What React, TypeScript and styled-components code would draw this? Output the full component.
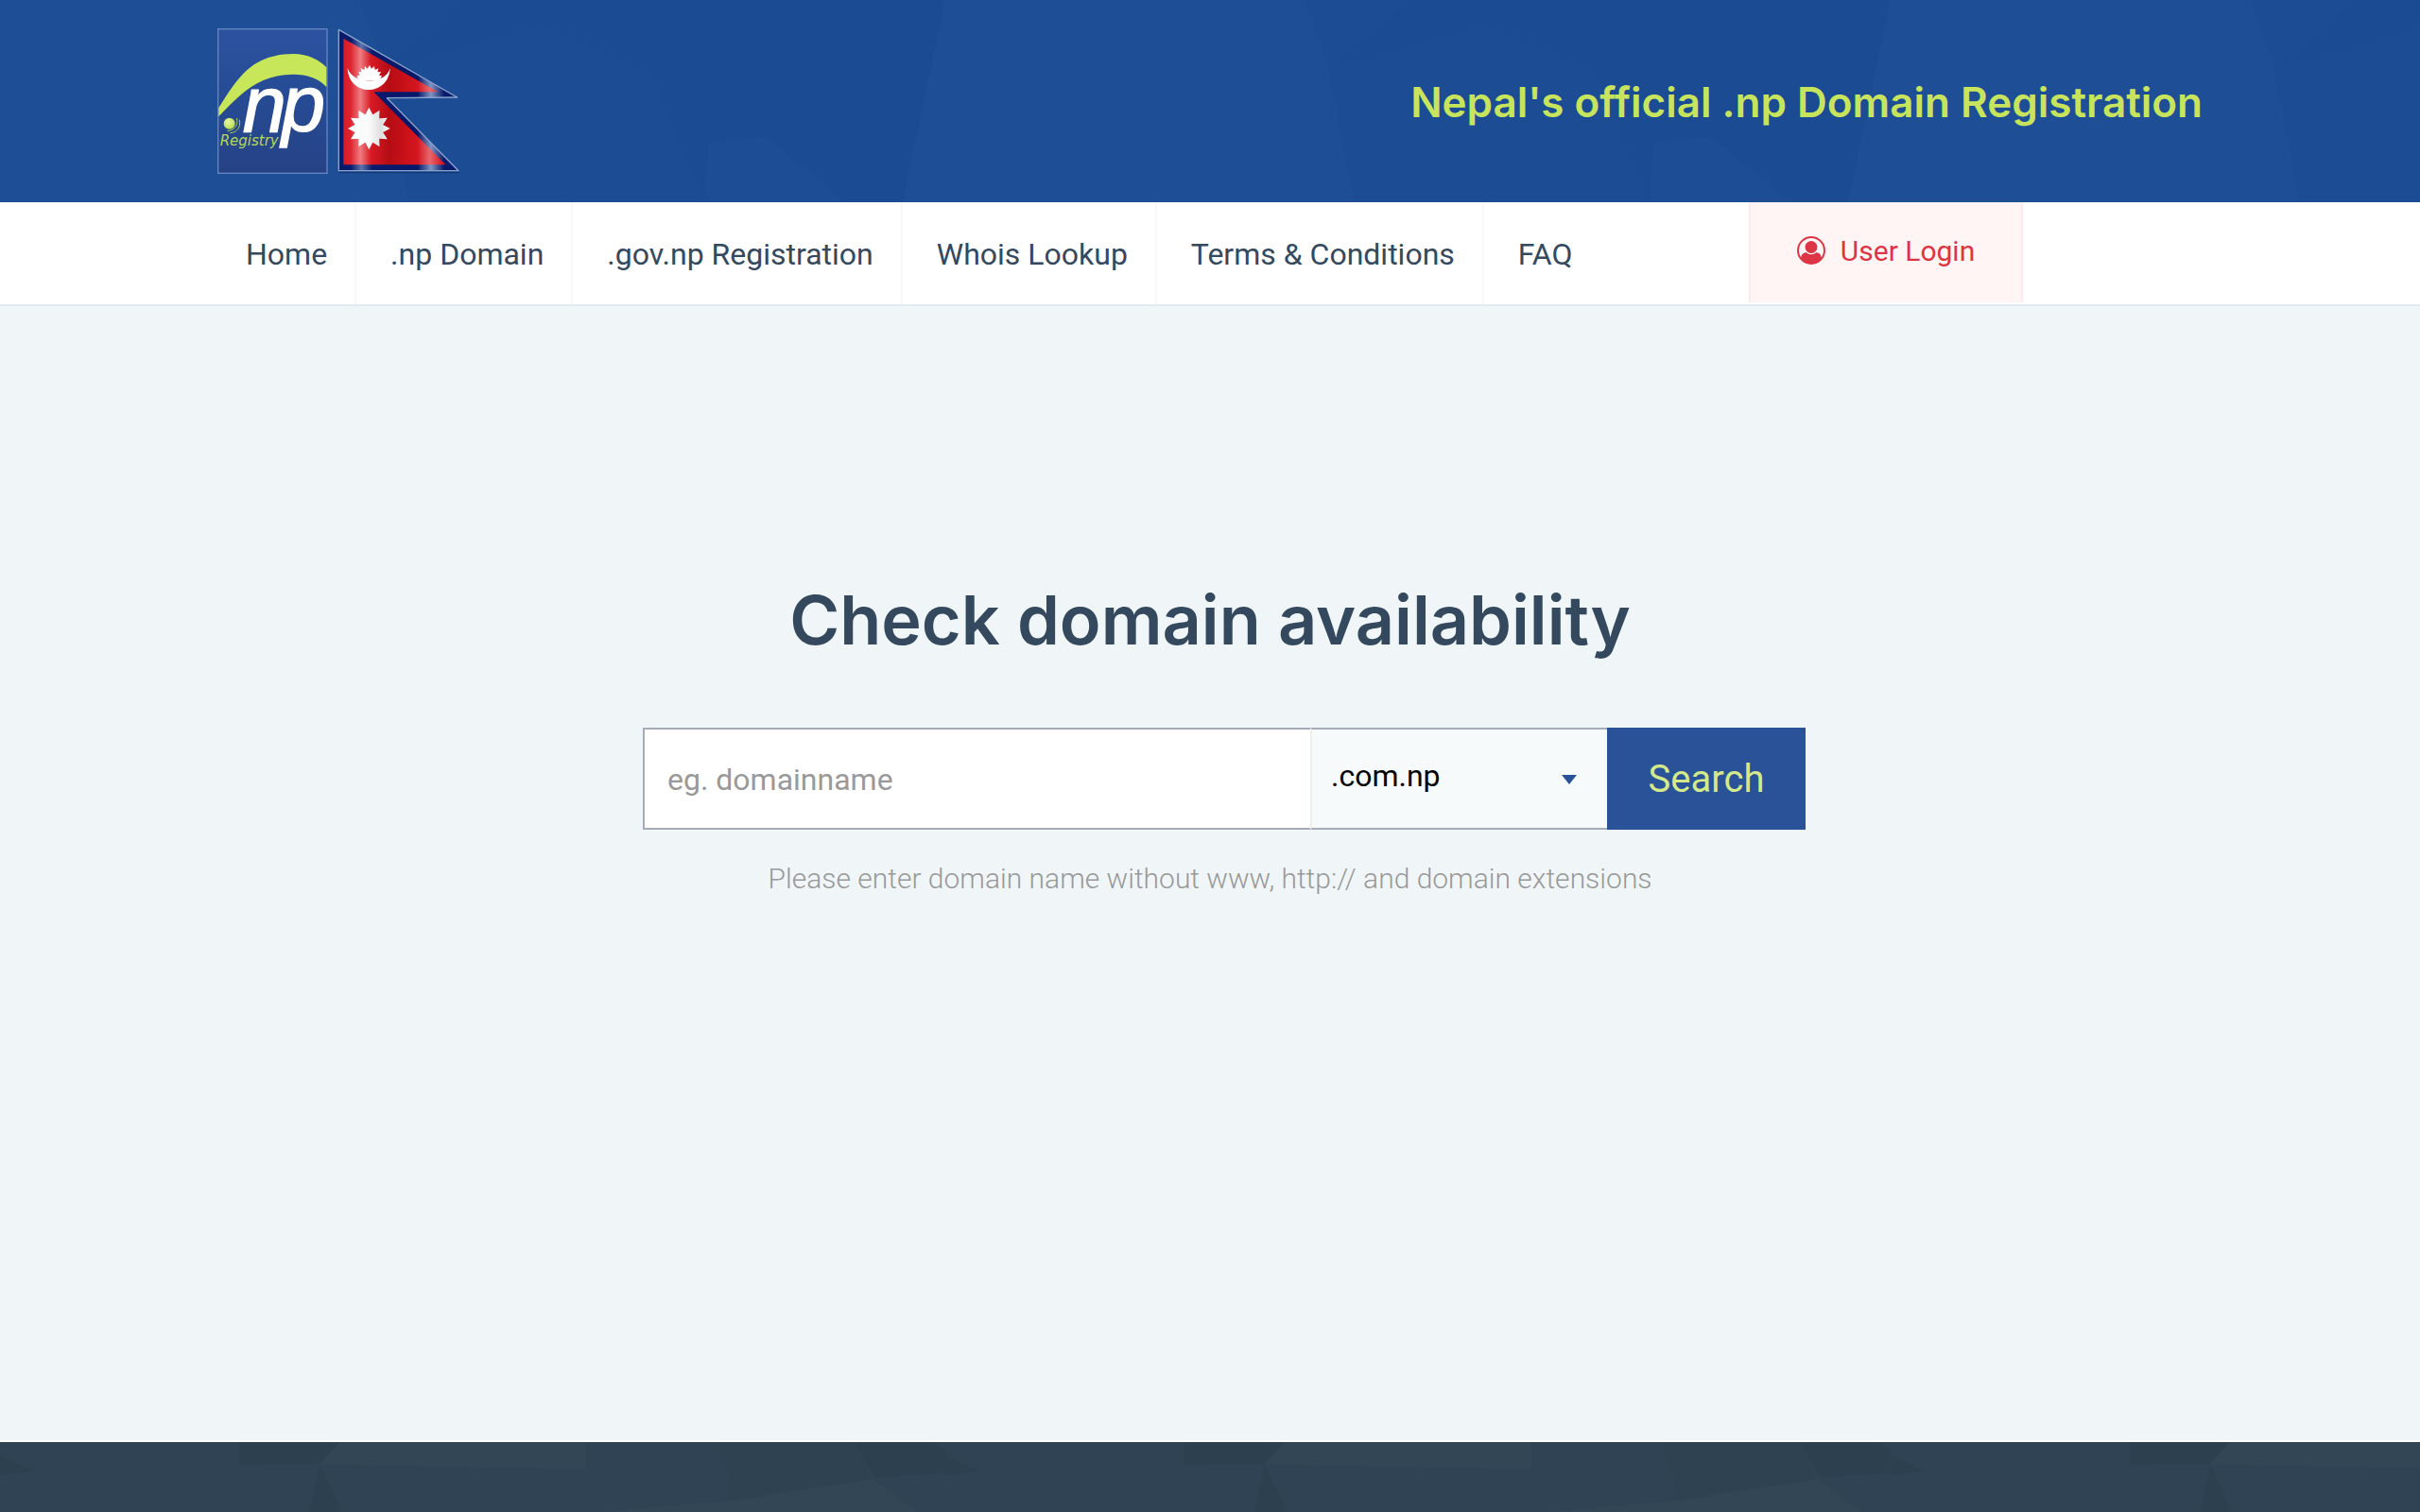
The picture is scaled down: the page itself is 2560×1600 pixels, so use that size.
import React from "react";
import styled, { createGlobalStyle } from "styled-components";

const GlobalStyle = createGlobalStyle`
  *, *::before, *::after { box-sizing: border-box; }
  body {
    margin: 0;
    background: #f0f6f8;
    color: #34495e;
    font-family: Roboto, "Liberation Sans", sans-serif;
    font-size: 32px;
  }
`;

const Page = styled.div`
  display: flex;
  flex-direction: column;
  min-height: 100vh;
`;

const Container = styled.div`
  width: 100%;
  max-width: 2100px;
  margin: 0 auto;
  display: flex;
`;

const Header = styled.header`
  position: relative;
  background: #1b4b93;
  padding: 30px 0 29px;
`;

const Backdrop = styled.svg`
  position: absolute;
  inset: 0;
  width: 100%;
  height: 100%;
`;

const HeaderRow = styled(Container)`
  position: relative;
  align-items: center;
  justify-content: space-between;
`;

const LogoLink = styled.a`
  display: block;
  svg { display: block; }
`;

const Tagline = styled.h2`
  margin: 0;
  color: #c8e45c;
  font-family: Inter, "Liberation Sans", sans-serif;
  font-size: 44px;
  font-weight: 600;
  line-height: 56px;
`;

const NavBar = styled.nav`
  background: #fff;
  border-bottom: 2px solid #e0ecf0;
`;

const NavRow = styled(Container)`
  height: 108px;
  padding-right: 190px;
`;

const Menu = styled.ul`
  display: flex;
  margin: 0;
  padding: 0;
  list-style: none;
`;

const MenuItem = styled.li`
  display: flex;
  border-right: 2px solid #f8f8f8;
  &:last-child { border-right: 0; }
  &:first-child a { padding-left: 30px; }
`;

const MenuLink = styled.a`
  display: flex;
  align-items: center;
  padding: 2px 29px 0 36px;
  color: #34495e;
  text-decoration: none;
  white-space: nowrap;
`;

const Login = styled.a`
  display: flex;
  align-items: center;
  justify-content: center;
  gap: 16px;
  width: 290px;
  height: 106px;
  margin-left: auto;
  padding-bottom: 4px;
  background: #fff5f4;
  border: solid #feebeb;
  border-width: 0 2px;
  color: #dc3545;
  font-size: 30px;
  text-decoration: none;
`;

const Main = styled.main`
  flex: 1;
  display: flex;
  flex-direction: column;
  align-items: center;
  padding-top: 285px;
  border-bottom: 2px solid #fff;
`;

const Title = styled.h1`
  margin: 0 0 67px;
  font-family: Inter, "Liberation Sans", sans-serif;
  font-size: 72px;
  font-weight: 600;
  line-height: 94px;
`;

const SearchForm = styled.form`
  display: flex;
  width: 1230px;
  max-width: 100%;
  height: 108px;
  margin-left: 30px;
`;

const DomainInput = styled.input`
  flex: 1;
  min-width: 0;
  padding: 2px 24px 0;
  background: #fff;
  border: 2px solid #a5abb8;
  border-right: 0;
  border-radius: 0;
  color: #34495e;
  font: 32px Roboto, "Liberation Sans", sans-serif;
  &::placeholder { color: #999; opacity: 1; }
`;

const SelectBox = styled.div`
  position: relative;
  display: flex;
  width: 314px;
`;

const Extension = styled.select`
  width: 100%;
  appearance: none;
  padding: 0 20px 6px;
  background: #f6fafb;
  border: 2px solid #a5abb8;
  border-left-color: #eee;
  border-right: 0;
  border-radius: 0;
  color: #000;
  font: 32px Roboto, "Liberation Sans", sans-serif;
`;

const Caret = styled.span`
  position: absolute;
  top: 50px;
  right: 32px;
  border: 8px solid transparent;
  border-top: 10px solid #2a5298;
  border-bottom: 0;
  pointer-events: none;
`;

const SearchButton = styled.button`
  width: 210px;
  padding: 0;
  background: #2a5298;
  border: 0;
  color: #d3e98a;
  font: 40px Roboto, "Liberation Sans", sans-serif;
`;

const Hint = styled.p`
  margin: 32px 0 0;
  color: #999;
  font-size: 30px;
  font-weight: 300;
  line-height: 40px;
`;

const Footer = styled.footer`
  position: relative;
  height: 74px;
  background: #304354;
`;

type Facet = { points: string; fill: string };

const headerFacets: Facet[] = [
  { points: "0,0 380,0 405,73 433,214 -45,214", fill: "#1e4f96" },
  { points: "1000,0 1000,214 955,214", fill: "#1e4f96" },
  { points: "380,0 490,0 405,73", fill: "#1c4d94" },
  { points: "405,73 575,25 690,80 745,214 433,214", fill: "#1b4c94" },
  { points: "745,214 750,150 810,145 895,214", fill: "#1c4d95" },
];

const footerFacets: Facet[] = [
  { points: "359,0 620,0 620,29 338,23", fill: "#324656" },
  { points: "253,0 359,0 338,23 253,24", fill: "#2d4050" },
  { points: "327,74 338,24 362,74", fill: "#2d4050" },
  { points: "759,0 903,0 923,39 776,62", fill: "#2f4252" },
  { points: "903,0 988,0 1037,31 926,38", fill: "#2d4050" },
  { points: "0,14 37,31 0,36", fill: "#2d4050" },
  { points: "923,40 970,74 640,74 776,62", fill: "#324656" },
];

function Facets({ id, height, facets }: { id: string; height: number; facets: Facet[] }) {
  return (
    <Backdrop aria-hidden="true">
      <defs>
        <pattern id={id} width="1000" height={height} patternUnits="userSpaceOnUse">
          {facets.map((f) => (
            <polygon key={f.points} points={f.points} fill={f.fill} />
          ))}
        </pattern>
      </defs>
      <rect width="100%" height="100%" fill={`url(#${id})`} />
    </Backdrop>
  );
}

function starPoints(cx: number, cy: number, outer: number, inner: number, rays: number) {
  return Array.from({ length: rays * 2 }, (_, i) => {
    const r = i % 2 ? inner : outer;
    const a = (Math.PI * i) / rays - Math.PI / 2;
    return `${(cx + r * Math.cos(a)).toFixed(1)},${(cy + r * Math.sin(a)).toFixed(1)}`;
  }).join(" ");
}

function Logo() {
  return (
    <svg width="260" height="155" viewBox="60 60 780 465" role="img" aria-label=".np Registry">
      <defs>
        <linearGradient id="panel" x1="0" y1="0" x2="0" y2="1">
          <stop offset="0" stopColor="#2d52a0" />
          <stop offset="0.5" stopColor="#264b94" />
          <stop offset="1" stopColor="#264285" />
        </linearGradient>
        <linearGradient id="cloth" gradientUnits="userSpaceOnUse" x1="445" y1="0" x2="825" y2="0">
          <stop offset="0" stopColor="#d8101c" />
          <stop offset="0.1" stopColor="#dc2530" />
          <stop offset="0.18" stopColor="#ee7b80" />
          <stop offset="0.27" stopColor="#d81a24" />
          <stop offset="0.42" stopColor="#b50d15" />
          <stop offset="0.54" stopColor="#c80f18" />
          <stop offset="0.66" stopColor="#d41720" />
          <stop offset="0.76" stopColor="#e8686e" />
          <stop offset="0.86" stopColor="#d81a24" />
        </linearGradient>
        <linearGradient id="hem" gradientUnits="userSpaceOnUse" x1="445" y1="0" x2="825" y2="0">
          <stop offset="0" stopColor="#0a1a6c" />
          <stop offset="0.1" stopColor="#0a1a6c" />
          <stop offset="0.19" stopColor="#5d74ab" />
          <stop offset="0.28" stopColor="#0a1a6c" />
          <stop offset="0.66" stopColor="#071868" />
          <stop offset="0.77" stopColor="#7f95c2" />
          <stop offset="0.88" stopColor="#0a1a6c" />
        </linearGradient>
        <linearGradient id="sun" x1="0" y1="0" x2="1" y2="0">
          <stop offset="0" stopColor="#fff" />
          <stop offset="0.5" stopColor="#fafafa" />
          <stop offset="0.8" stopColor="#dedede" />
          <stop offset="1" stopColor="#fff" />
        </linearGradient>
        <radialGradient id="ball" cx="0.4" cy="0.35" r="0.7">
          <stop offset="0" stopColor="#e4f5a4" />
          <stop offset="1" stopColor="#b9dc45" />
        </radialGradient>
      </defs>
      <rect x="62" y="62" width="346" height="458" fill="url(#panel)" stroke="#6486c3" strokeWidth="4" />
      <path d="M64 312 C120 225 165 142 300 141 C350 141 385 162 406 184 L406 246 C380 218 345 206 300 206 C190 208 135 265 64 340 Z" fill="#c8e65a" />
      <circle cx="98" cy="362" r="18" fill="url(#ball)" />
      <path d="M121 345 C127 362 118 384 91 386 M130 350 C135 374 121 392 100 392" fill="none" stroke="#a8cc50" strokeWidth="3" />
      <text x="140 264" y="387" fill="#fff" stroke="#fff" strokeWidth="4" fontFamily='"Liberation Sans", Arial, sans-serif' fontStyle="italic" fontSize="248">np</text>
      <text x="68" y="432" fill="#b4d65a" fontFamily='"DejaVu Sans", Verdana, sans-serif' fontStyle="italic" fontSize="45">Registry</text>
      <path d="M447 517 H828" stroke="#123a78" strokeWidth="5" />
      <path d="M445 64 L821 279 L598 281 L825 512 L445 512 Z" fill="url(#hem)" stroke="#8ba4cf" strokeWidth="4" strokeLinejoin="round" />
      <path d="M460 92 L760 262 L556 262 L784 493 L460 493 Z" fill="url(#cloth)" />
      <path d="M473 186 C476 278 604 278 608 186 C594 240 490 240 473 186 Z" fill="#fff" />
      <path d="M508 226 L503 210 L512 209 L507 197 L517 199 L515 187 L526 192 L528 180 L536 188 L543 177 L549 188 L558 180 L560 192 L571 187 L568 199 L579 198 L573 209 L582 211 L574 226 Z" fill="#fff" />
      <polygon points={starPoints(541, 378, 67, 46, 12)} fill="url(#sun)" />
    </svg>
  );
}

function UserIcon() {
  return (
    <svg width="30" height="30" viewBox="0 0 30 30" aria-hidden="true">
      <circle cx="15" cy="15" r="14" fill="none" stroke="#dc3545" strokeWidth="2" />
      <circle cx="15" cy="11.5" r="6.5" fill="#dc3545" />
      <path d="M4 23 C5 19 6 18 9.500 17 C12.500 20 17.500 20 20.500 17 C24 18 25 19 26 23 C20 31 10 31 4 23 Z" fill="#dc3545" />
    </svg>
  );
}

const links = ["Home", ".np Domain", ".gov.np Registration", "Whois Lookup", "Terms & Conditions", "FAQ"];
const extensions = [".com.np", ".org.np", ".net.np", ".edu.np", ".gov.np"];

export default function App() {
  return (
    <Page>
      <GlobalStyle />
      <Header>
        <Facets id="header-facets" height={214} facets={headerFacets} />
        <HeaderRow>
          <LogoLink href="#">
            <Logo />
          </LogoLink>
          <Tagline>Nepal's official .np Domain Registration</Tagline>
        </HeaderRow>
      </Header>
      <NavBar>
        <NavRow>
          <Menu>
            {links.map((label) => (
              <MenuItem key={label}>
                <MenuLink href="#">{label}</MenuLink>
              </MenuItem>
            ))}
          </Menu>
          <Login href="#">
            <UserIcon />
            User Login
          </Login>
        </NavRow>
      </NavBar>
      <Main>
        <Title>Check domain availability</Title>
        <SearchForm onSubmit={(e) => e.preventDefault()}>
          <DomainInput type="text" aria-label="Domain name" placeholder="eg. domainname" />
          <SelectBox>
            <Extension aria-label="Domain extension">
              {extensions.map((ext) => (
                <option key={ext}>{ext}</option>
              ))}
            </Extension>
            <Caret />
          </SelectBox>
          <SearchButton type="submit">Search</SearchButton>
        </SearchForm>
        <Hint>Please enter domain name without www, http:// and domain extensions</Hint>
      </Main>
      <Footer>
        <Facets id="footer-facets" height={74} facets={footerFacets} />
      </Footer>
    </Page>
  );
}
